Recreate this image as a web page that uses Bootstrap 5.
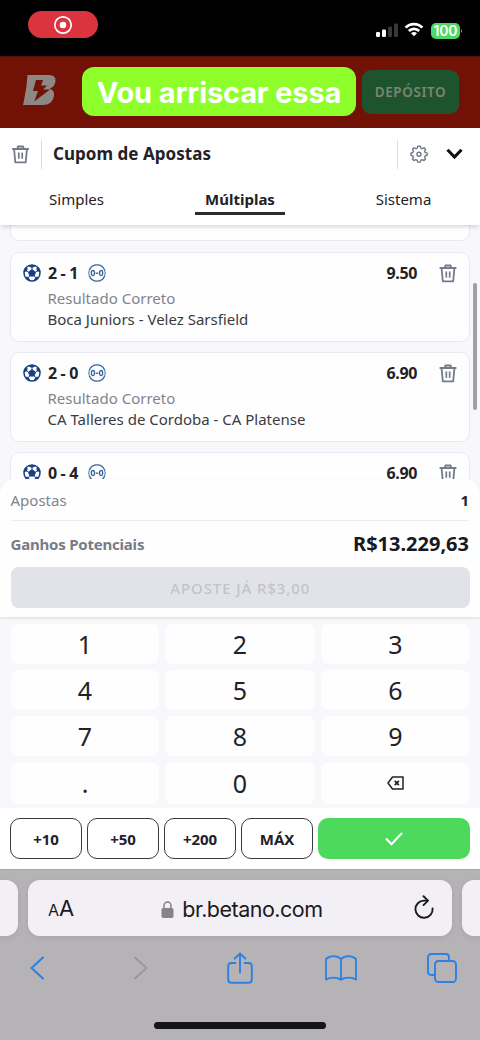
<!DOCTYPE html>
<html lang="pt-BR">
<head>
<meta charset="utf-8">
<meta name="viewport" content="width=device-width, initial-scale=1">
<title>Cupom de Apostas</title>
<link href="https://cdn.jsdelivr.net/npm/bootstrap@5.3.0/dist/css/bootstrap.min.css" rel="stylesheet">
<style>
body{width:480px;height:1040px;overflow:hidden;background:#fff;color:#222127;font-family:"Noto Sans","Open Sans",sans-serif;font-size:15px;line-height:20px}
svg{display:block;flex:none}
.ios{font-family:Inter,"Liberation Sans",sans-serif}
.status{height:56px;background:#000}
.rec{width:70px;height:27px;background:#dc3340;margin:11px 0 0 28px}
.sysicons{margin:22px 17px 0 0}
.batt{width:29px;height:16px;border-radius:5px;background:#4cd964;color:#fff;font-size:14px;line-height:16px;font-weight:600;letter-spacing:-.2px}
.brand{height:72px;background:#721207;padding:0 21px 0 22px;box-shadow:inset 0 1px #4c1008}
.caption-pill{width:274px;height:49px;border-radius:12px;background:#8fff2b;color:#fff;font-size:29px;font-weight:700;letter-spacing:-.15px;margin:11px 6px 0 26px;padding-top:2px}
.dep{width:97px;height:44px;margin-top:14px;border-radius:9px;background:#1e542d;color:#7c8474;font-weight:600;font-size:13.5px;letter-spacing:.6px}
.coupon{height:52px;padding:0 17px 0 11px}
.vline{width:1px;height:29px;background:#dcdce4}
.ttl{font-size:17px;font-weight:700;letter-spacing:.04px}
.tabrow{height:45px;position:relative;z-index:2;background:#fff;box-shadow:0 4px 4px -2px rgba(60,60,80,.2)}
.tabrow>div{height:35px;line-height:39px}
.tabrow .on{width:90px;border-bottom:3px solid #2b2a31;font-weight:700;color:#222127}
.slip{height:254px;background:#f8f7fb;overflow:hidden;position:relative;padding:0 10px}
.bet{background:#fefefe;border:1px solid #e9e8ee;border-radius:9px;height:90px;margin-bottom:10px;padding:10px 12px 0 12px}
.bet.tail{height:16px;margin-bottom:11px;border-top:0;border-radius:0 0 9px 9px}
.bet .head{height:20px}
.bet b{font-size:16px;line-height:18px;letter-spacing:-.35px}
.bet .sub{margin-left:24.5px;color:#81848f;height:21px;line-height:21px;margin-top:5px}
.bet .match{margin-left:24.5px;color:#3b3a43;line-height:20px}
.thumb{position:absolute;right:3px;top:58px;width:4px;height:127px;border-radius:2px;background:#a09fa2}
.sumwrap{height:138px;background:#f8f7fb}
.summ{height:138px;background:#fefefe;border-radius:14px 14px 0 0;padding:0 11px 0 10.5px;position:relative;z-index:1;box-shadow:0 1px 3px rgba(60,60,80,.16)}
.summ .r1{height:42px;border-bottom:1px solid #ecebf0;color:#81848f}
.summ .r2{height:46px;color:#777b87;font-weight:700}
.ganhos{letter-spacing:-.21px}
.big{font-size:20px;color:#19181e}
.cta{height:41px;border-radius:8px;background:#e2e3e9;color:#c2c3cd;font-size:15px;letter-spacing:.9px;font-weight:500;margin-right:-1px}
.pad{height:191px;background:#f8f7fb;padding:7px 10px 4px 11px;display:grid;grid-template-columns:148px 150px 149px;grid-template-rows:40px 40px 40px 42px;gap:6px;font-size:25px}
.pad>div{background:#fefefe;border-radius:8px;display:flex;align-items:center;justify-content:center}
.quick{height:61px;padding:10px 10px 0;gap:5px;background:#fff}
.quick>div{width:72px;height:41px;border:1.5px solid #3b3a40;border-radius:10px;font-weight:700;font-size:15px;letter-spacing:-.1px}
.quick .ok{width:152px;border:0;background:#4cd95c}
.safari{height:171px;background:#b5b3b6;border-top:1px solid #aaa8ab}
.bar{height:56px;background:#f2f0f5;border-radius:12px;box-shadow:0 2px 6px rgba(0,0,0,.08)}
.bar.main{width:424px;padding:2px 18px 0 20px;font-size:21.5px;color:#1b1a1f}
.url{letter-spacing:-.5px}
.side{width:18px}
.tools{height:62px;padding:2px 23px 0 30px}
.home{width:172px;height:7px;border-radius:4px;background:#151418;margin:24px auto 0}
</style>
</head>
<body>
<svg width="0" height="0" class="position-absolute">
 <symbol id="bin" viewBox="0 0 18 19"><g fill="none" stroke="#757b8a" stroke-width="1.8" stroke-linejoin="round"><path d="M.6 4h16.8M5.800 3.800l.6-2.300h5.200l.6 2.300M2.600 4.400l1.200 13h10.400l1.200-13"/><path d="M7.300 7.500v6.200M10.700 7.500v6.200" stroke-width="1.700"/></g></symbol>
 <symbol id="ball" viewBox="0 0 18 18"><circle cx="9" cy="9" r="8" fill="#fff" stroke="#193f82" stroke-width="1.500"/><g fill="#193f82" stroke="#193f82" stroke-width=".9"><path d="M9 5.600l3.500 2.500-1.300 4H6.800l-1.300-4zM5.800 1.800h6.400L9 3.600zM1 7.500l1.300-3.700 1.900.7-.6 2.600zM17 7.500l-1.300-3.700-1.900.7.6 2.600zM2.900 13.300l2.400-.1 1.300 3.200-1.900-.7zM15.100 13.300l-2.400-.1-1.300 3.200 1.900-.7z"/><path d="M9 6V3.300M5.700 8.200L3.300 6.800M12.300 8.200l2.400-1.400M6.800 12l-1.700 1.900M11.200 12l1.700 1.900" fill="none"/></g></symbol>
 <symbol id="score" viewBox="0 0 18 18"><g fill="none" stroke="#33639f"><path d="M1.300 6.200a8.200 8.200 0 0 1 15.400 0M1.300 11.800a8.200 8.200 0 0 0 15.400 0" stroke-width="1.300"/><path d="M1.300 6.200a8.200 8.200 0 0 0 0 5.600M16.700 6.200a8.200 8.200 0 0 1 0 5.600" stroke-width=".9"/><rect x="3.400" y="6.500" width="3" height="5" rx="1.500" stroke-width="1.300"/><rect x="11.600" y="6.500" width="3" height="5" rx="1.500" stroke-width="1.300"/><path d="M7.600 9.200h2.800" stroke-width="1.300"/></g></symbol>
</svg>

<div class="status d-flex justify-content-between align-items-start">
 <div class="rec rounded-pill d-flex align-items-center justify-content-center"><svg width="20" height="20" viewBox="0 0 20 20"><circle cx="10" cy="10" r="8.200" fill="none" stroke="#fff" stroke-width="1.700"/><circle cx="10" cy="10" r="3.300" fill="#fff"/></svg></div>
 <div class="sysicons d-flex align-items-center">
  <svg width="23" height="16" viewBox="0 0 23 16"><g fill="#fff"><rect x="0" y="9" width="4" height="5" rx="1.300"/><rect x="6" y="6.500" width="4" height="7.500" rx="1.300"/></g><g fill="#38383b"><rect x="12" y="3.500" width="4" height="10.500" rx="1.300"/><rect x="18" y=".5" width="4" height="13.500" rx="1.300"/></g></svg>
  <svg style="margin:0 3px 2px 5px" width="20" height="15" viewBox="0 0 22 16"><g fill="none" stroke="#fff" stroke-width="2.900"><path d="M1.800 6a12.800 12.800 0 0 1 18.400 0M5.300 9.700a8 8 0 0 1 11.400 0"/></g><path d="M11 15.500L7.700 12.200a4.800 4.800 0 0 1 6.600 0z" fill="#fff"/></svg>
  <div class="batt ios text-center ms-1">100</div><svg width="3" height="6" viewBox="0 0 3 6"><path d="M1 1q2 2 0 4z" fill="#4cd964"/></svg>
 </div>
</div>

<div class="brand d-flex align-items-start">
 <svg style="margin-top:18px" width="34" height="32" viewBox="0 0 34 32"><path fill="#8c8883" fill-rule="evenodd" d="M5.500 1H27q7 0 6.500 6-.5 5.500-6 7.800 5.500 1.500 4.500 7.200-1.500 9-11.500 9H1l1.200-5.500L4.500 12zM14 6l-3 11h5l-3.800 10.500L28 15.500h-7l4-4h-6l2-5.500z"/></svg>
 <div class="caption-pill ios d-flex align-items-center justify-content-center text-nowrap">Vou arriscar essa</div>
 <div class="dep d-flex align-items-center justify-content-center">DEPÓSITO</div>
</div>

<div class="coupon d-flex align-items-center">
 <svg width="19" height="19"><use href="#bin"/></svg>
 <div class="vline" style="margin:0 11px"></div>
 <div class="ttl me-auto">Cupom de Apostas</div>
 <div class="vline"></div>
 <svg style="margin-left:12px" width="18" height="18" viewBox="0 0 18 18"><g fill="none" stroke="#747a89" stroke-width="1.500" stroke-linejoin="round"><path d="M7.700 1h2.600l.6 2 1.500.6 1.900-1 1.600 1.600-1 1.900.6 1.500 2 .6v2.300l-2 .6-.6 1.500 1 1.900-1.600 1.600-1.900-1-1.500.6-.6 2H7.700l-.6-2-1.500-.6-1.900 1-1.600-1.600 1-1.900-.6-1.500-2-.6V8.200l2-.6.6-1.500-1-1.900 1.600-1.600 1.900 1L7.100 3z" transform="translate(.45 .3) scale(.95)"/><circle cx="9" cy="9.200" r="2"/></g></svg>
 <svg style="margin-left:18px" width="17" height="12" viewBox="0 0 17 12"><path d="M1.500 1.700l7 7.300 7-7.300" fill="none" stroke="#111" stroke-width="3.100"/></svg>
</div>

<div class="tabrow d-flex justify-content-between">
 <div class="text-center" style="width:153px">Simples</div><div class="on text-center">Múltiplas</div><div class="text-center" style="width:153px">Sistema</div>
</div>

<div class="slip">
 <div class="bet tail"></div>
 <div class="bet"><div class="head d-flex align-items-center"><svg width="18" height="18"><use href="#ball"/></svg><b style="margin-left:7px">2 - 1</b><svg style="margin-left:10px" width="18" height="18"><use href="#score"/></svg><b class="ms-auto">9.50</b><svg style="margin-left:22px" width="18" height="19"><use href="#bin"/></svg></div><div class="sub">Resultado Correto</div><div class="match">Boca Juniors - Velez Sarsfield</div></div>
 <div class="bet"><div class="head d-flex align-items-center"><svg width="18" height="18"><use href="#ball"/></svg><b style="margin-left:7px">2 - 0</b><svg style="margin-left:10px" width="18" height="18"><use href="#score"/></svg><b class="ms-auto">6.90</b><svg style="margin-left:22px" width="18" height="19"><use href="#bin"/></svg></div><div class="sub">Resultado Correto</div><div class="match">CA Talleres de Cordoba - CA Platense</div></div>
 <div class="bet"><div class="head d-flex align-items-center"><svg width="18" height="18"><use href="#ball"/></svg><b style="margin-left:7px">0 - 4</b><svg style="margin-left:10px" width="18" height="18"><use href="#score"/></svg><b class="ms-auto">6.90</b><svg style="margin-left:22px" width="18" height="19"><use href="#bin"/></svg></div></div>
 <div class="thumb"></div>
</div>

<div class="sumwrap"><div class="summ">
 <div class="r1 d-flex justify-content-between align-items-center"><span>Apostas</span><b class="text-dark">1</b></div>
 <div class="r2 d-flex justify-content-between align-items-center"><span class="ganhos">Ganhos Potenciais</span><span class="big">R$13.229,63</span></div>
 <div class="cta d-flex align-items-center justify-content-center">APOSTE JÁ R$3,00</div>
</div></div>

<div class="pad"><div>1</div><div>2</div><div>3</div><div>4</div><div>5</div><div>6</div><div>7</div><div>8</div><div>9</div><div>.</div><div>0</div>
 <div><svg width="17" height="14" viewBox="0 0 17 14"><path d="M5.500 1H16v12H5.500L1 7z" fill="none" stroke="#222" stroke-width="1.500" stroke-linejoin="round"/><path d="M7.700 4.800l4.200 4.400M11.900 4.800L7.700 9.200" stroke="#222" stroke-width="1.700"/></svg></div></div>

<div class="quick d-flex">
 <div class="d-flex align-items-center justify-content-center">+10</div><div class="d-flex align-items-center justify-content-center">+50</div><div class="d-flex align-items-center justify-content-center">+200</div><div class="d-flex align-items-center justify-content-center">MÁX</div>
 <div class="ok d-flex align-items-center justify-content-center"><svg width="18" height="14" viewBox="0 0 18 14"><path d="M1 6.500l5.500 5.800L17 1" fill="none" stroke="#fff" stroke-width="2"/></svg></div>
</div>

<div class="safari ios">
 <div class="d-flex justify-content-between" style="padding-top:10px">
  <div class="bar side rounded-start-0"></div>
  <div class="bar main d-flex align-items-center"><span><span style="font-size:16px">A</span><span style="font-size:22px">A</span></span>
   <svg style="margin-left:87px" width="13" height="17" viewBox="0 0 13 17"><rect x=".5" y="7" width="12" height="10" rx="1.700" fill="#858388"/><path d="M3 7.500V4.500a3.500 3.500 0 0 1 7 0v3" fill="none" stroke="#858388" stroke-width="1.500"/></svg>
   <span class="url" style="margin-left:8px">br.betano.com</span>
   <svg class="ms-auto mb-1" width="20" height="24" viewBox="0 0 20 24"><g fill="none" stroke="#1b1a1f" stroke-width="1.900" stroke-linecap="round" stroke-linejoin="round"><path d="M13.500 5.600H10A8.600 8.600 0 1 0 18.600 13.500"/><path d="M9.500 1.200l4.500 4.400-4.500 4.500"/></g></svg></div>
  <div class="bar side rounded-end-0"></div>
 </div>
 <div class="tools d-flex align-items-center">
  <svg width="14" height="24" viewBox="0 0 14 24"><path d="M13 1.500L1.500 12 13 22.500" fill="none" stroke="#2e7fe3" stroke-width="2.100" stroke-linecap="round"/></svg>
  <svg style="margin-left:90px" width="14" height="24" viewBox="0 0 14 24"><path d="M1 1.500L12.500 12 1 22.500" fill="none" stroke="#979599" stroke-width="1.800" stroke-linecap="round"/></svg>
  <svg style="margin-left:79px" width="26" height="32" viewBox="0 0 26 32"><g fill="none" stroke="#2e7fe3" stroke-width="1.900" stroke-linecap="round" stroke-linejoin="round"><path d="M8.500 11H4.500Q1.200 11 1.200 14.200V27.500Q1.200 30.800 4.500 30.800H21.500Q24.800 30.800 24.800 27.500V14.200Q24.800 11 21.500 11H17.500M13 20.500V1.500M7.800 6.500L13 1.300l5.200 5.200"/></g></svg>
  <svg style="margin-left:72px" width="32" height="26" viewBox="0 0 32 26"><path d="M16 4Q13 1.200 8.500 1.200T1 4V24.600Q4 22.600 8.500 22.600T16 24.800Q19 22.600 23.500 22.600T31 24.600V4Q28 1.200 23.500 1.200T16 4zV24.500" fill="none" stroke="#2e7fe3" stroke-width="1.800" stroke-linejoin="round"/></svg>
  <svg class="ms-auto" width="30" height="30" viewBox="0 0 30 30"><g fill="none" stroke="#2e7fe3" stroke-width="1.900"><rect x="8" y="8" width="21" height="21" rx="3.500"/><path d="M8 22H4.500Q1 22 1 18.500V4.500Q1 1 4.500 1H18.500Q22 1 22 4.500V8"/></g></svg>
 </div>
 <div class="home"></div>
</div>
<script src="https://cdn.jsdelivr.net/npm/bootstrap@5.3.0/dist/js/bootstrap.bundle.min.js"></script>
</body>
</html>
